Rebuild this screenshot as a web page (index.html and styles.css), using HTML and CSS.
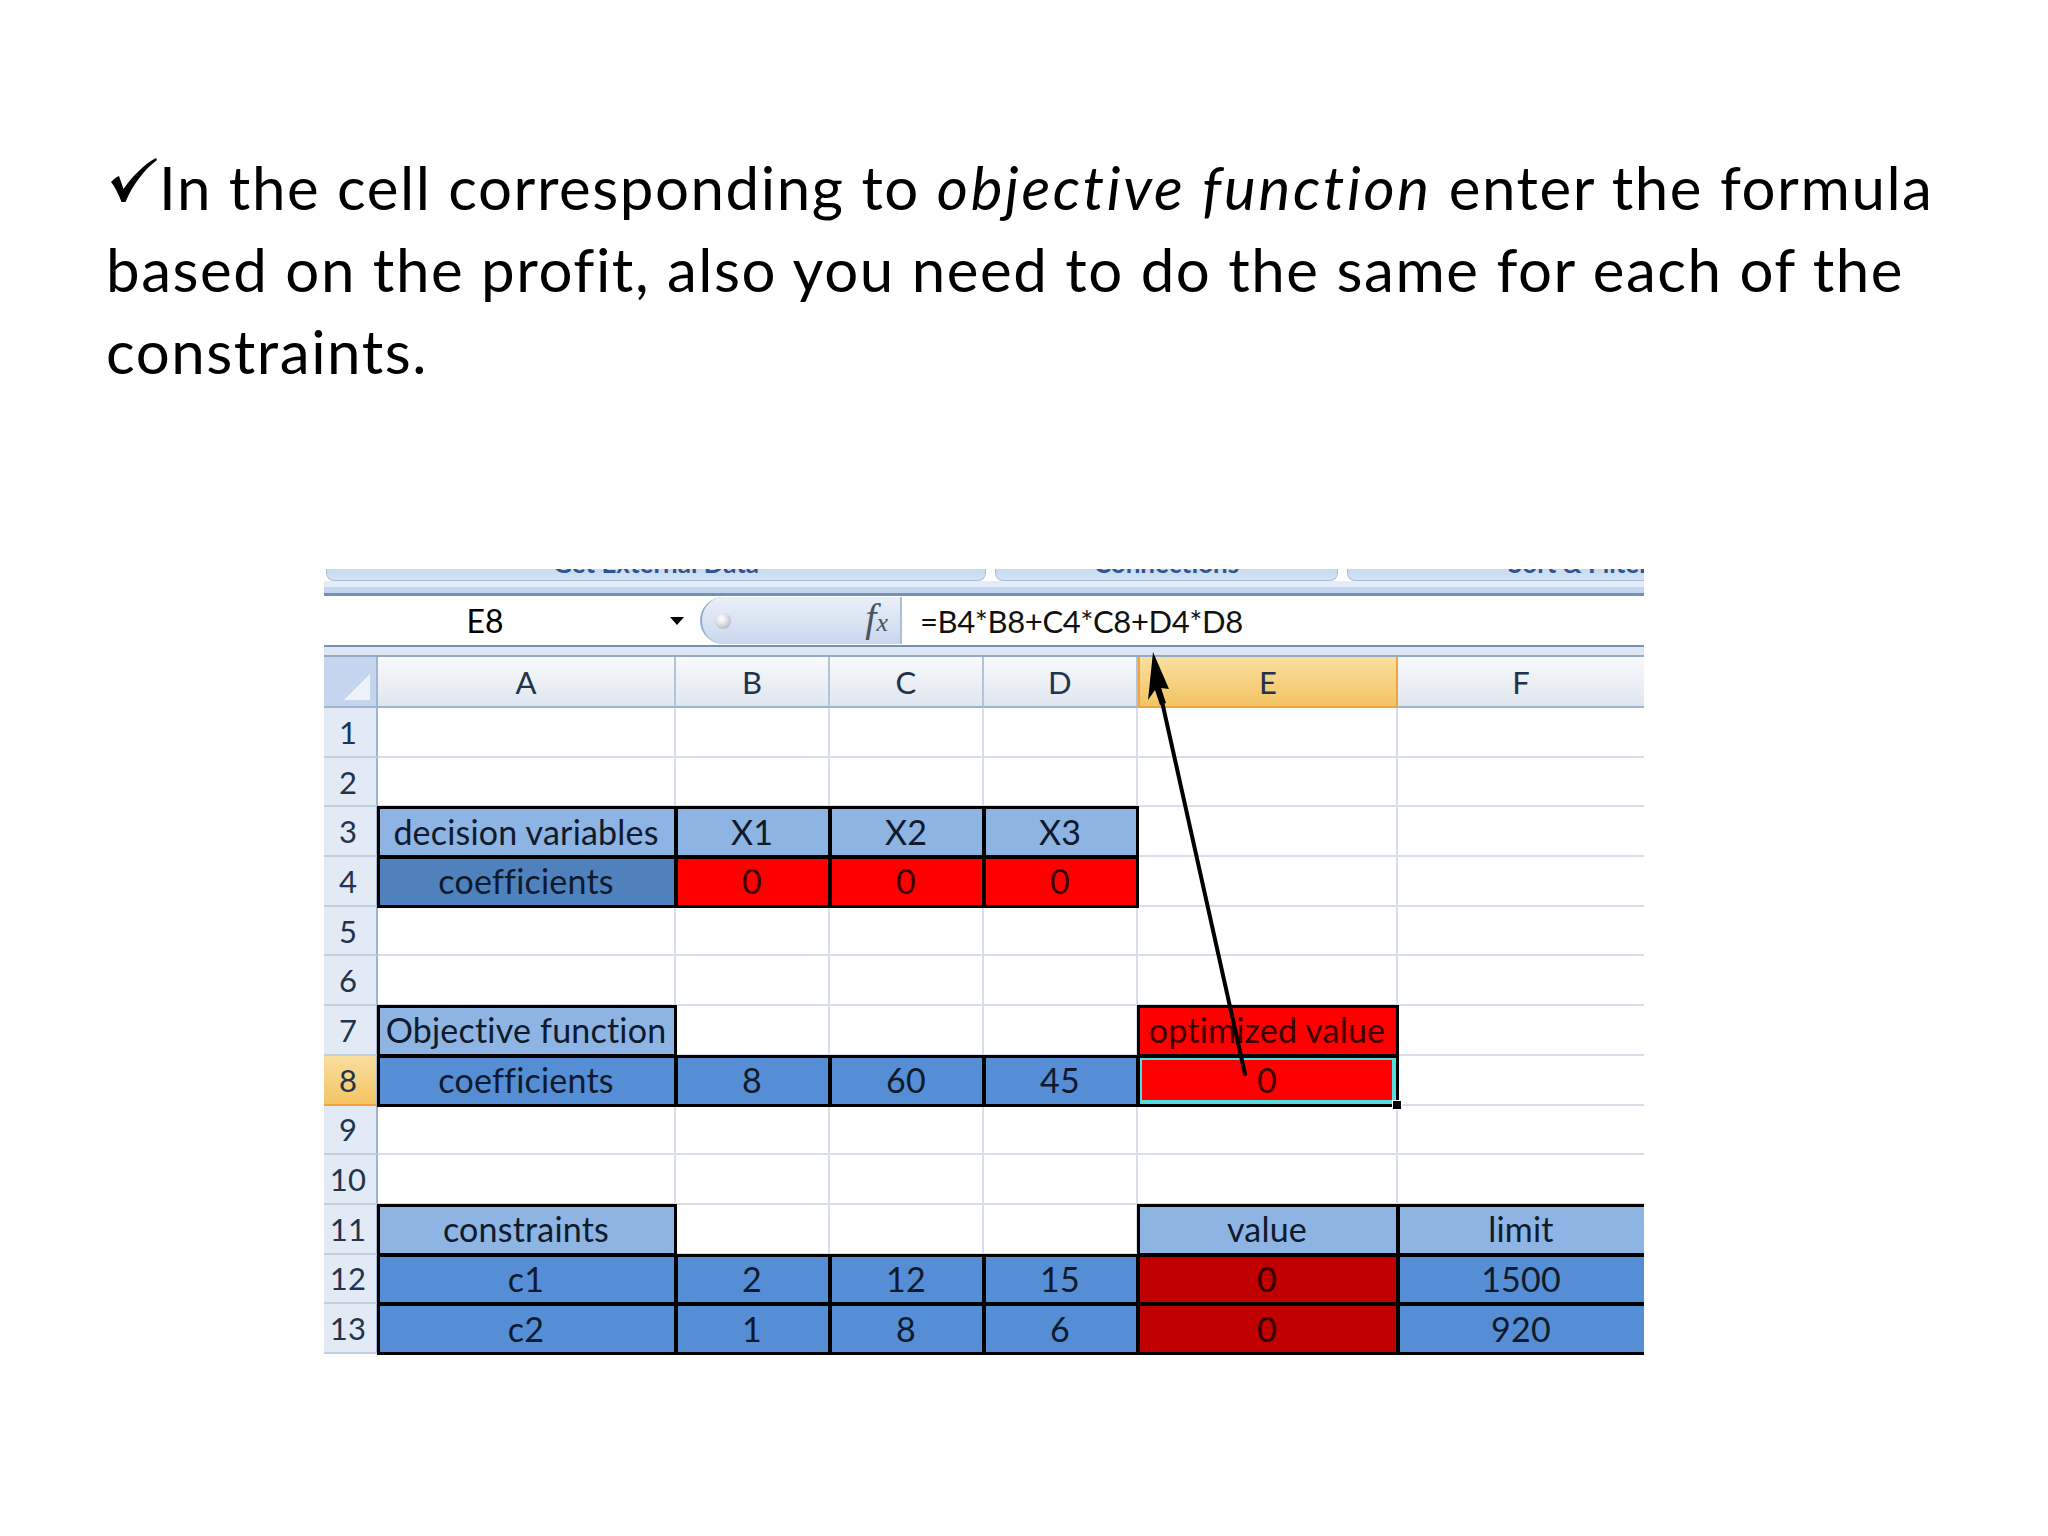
FILE: index.html
```html
<!DOCTYPE html>
<html>
<head>
<meta charset="utf-8">
<link rel="stylesheet" href="styles.css">
</head>
<body>
<div class="slide">
  <p class="bullet">
    <span class="line"><svg class="check" width="46" height="44" viewBox="0 0 46 44"><path d="M0 24 C3 21 5 19 8 18 L12.5 31 C21 19 32 7 45 0 L46 2 C34 11 22 26 14.5 44 L10.5 44 C7.5 36 4 29 0 24 Z" fill="#000"/></svg>In the cell corresponding to <em>objective function</em> enter the formula</span>
    <span class="line">based on the profit, also you need to do the same for each of the</span>
    <span class="line">constraints.</span>
  </p>
  <div class="sheet">
    <div class="ribbon">
      <div class="groups">
        <div class="grp g1"><span>Get External Data</span></div>
        <div class="grp g2"><span>Connections</span></div>
        <div class="grp g3"><span>Sort &amp; Filter</span></div>
      </div>
      <div class="strip"></div>
    </div>
    <div class="fbar">
      <div class="namebox"><span class="name">E8</span><span class="dd"></span></div>
      <div class="pill"><span class="knob"></span><span class="fx">f<span class="fxx">x</span></span></div>
      <div class="formula">=B4*B8+C4*C8+D4*D8</div>
    </div>
    <div class="sep"></div>
    <div class="grid">
      <div class="corner"><svg width="30" height="30" viewBox="0 0 30 30"><path d="M28 2 L28 28 L2 28 Z" fill="#eef3f9"/></svg></div>
      <div class="ch">A</div><div class="ch">B</div><div class="ch">C</div><div class="ch">D</div><div class="ch hi">E</div><div class="ch">F</div>

      <div class="rh">1</div><div class="c"></div><div class="c"></div><div class="c"></div><div class="c"></div><div class="c"></div><div class="c"></div>
      <div class="rh">2</div><div class="c"></div><div class="c"></div><div class="c"></div><div class="c"></div><div class="c"></div><div class="c"></div>
      <div class="rh">3</div><div class="c lb bx">decision variables</div><div class="c lb bx">X1</div><div class="c lb bx">X2</div><div class="c lb bx">X3</div><div class="c"></div><div class="c"></div>
      <div class="rh">4</div><div class="c mb bx">coefficients</div><div class="c rd bx">0</div><div class="c rd bx">0</div><div class="c rd bx">0</div><div class="c"></div><div class="c"></div>
      <div class="rh">5</div><div class="c"></div><div class="c"></div><div class="c"></div><div class="c"></div><div class="c"></div><div class="c"></div>
      <div class="rh">6</div><div class="c"></div><div class="c"></div><div class="c"></div><div class="c"></div><div class="c"></div><div class="c"></div>
      <div class="rh">7</div><div class="c lb bx">Objective function</div><div class="c"></div><div class="c"></div><div class="c"></div><div class="c rd bx">optimized value</div><div class="c"></div>
      <div class="rh hi">8</div><div class="c bl bx">coefficients</div><div class="c bl bx">8</div><div class="c bl bx">60</div><div class="c bl bx">45</div><div class="c rd sel">0</div><div class="c"></div>
      <div class="rh">9</div><div class="c"></div><div class="c"></div><div class="c"></div><div class="c"></div><div class="c"></div><div class="c"></div>
      <div class="rh">10</div><div class="c"></div><div class="c"></div><div class="c"></div><div class="c"></div><div class="c"></div><div class="c"></div>
      <div class="rh">11</div><div class="c lb bx">constraints</div><div class="c"></div><div class="c"></div><div class="c"></div><div class="c lb bx">value</div><div class="c lb bx">limit</div>
      <div class="rh">12</div><div class="c bl bx">c1</div><div class="c bl bx">2</div><div class="c bl bx">12</div><div class="c bl bx">15</div><div class="c dr bx">0</div><div class="c bl bx">1500</div>
      <div class="rh">13</div><div class="c bl bx">c2</div><div class="c bl bx">1</div><div class="c bl bx">8</div><div class="c bl bx">6</div><div class="c dr bx">0</div><div class="c bl bx">920</div>
    </div>
    <svg class="arrow" width="1320" height="790" viewBox="0 0 1320 790">
      <line x1="833" y1="110" x2="921" y2="505" stroke="#000" stroke-width="4" stroke-linecap="round"/>
      <path d="M829 83 L824 131 L831 121 L836 136 L842 134 L837 119 L845 120 Z" fill="#000"/>
    </svg>
  </div>
</div>
</body>
</html>
```
FILE: styles.css
```css
html, body {
  margin: 0;
  padding: 0;
  background: #ffffff;
}
body {
  width: 2048px;
  height: 1536px;
  overflow: hidden;
  font-family: Lato, "Open Sans", sans-serif;
  color: #000;
}
.slide {
  padding-top: 146px;
}
.bullet {
  margin: 0;
  padding-left: 106px;
  font-size: 60px;
  line-height: 82px;
  letter-spacing: 1.55px;
}
.bullet .line {
  display: block;
  white-space: nowrap;
}
.bullet em {
  font-style: italic;
  letter-spacing: 2.7px;
}
.check {
  vertical-align: 8px;
  margin-left: 5px;
  margin-right: 2px;
}

/* spreadsheet */
.sheet {
  position: relative;
  margin-top: 177px;
  margin-left: 324px;
  width: 1320px;
}
.ribbon {
  height: 27px;
  overflow: hidden;
}
.groups {
  display: flex;
  height: 12px;
  gap: 9px;
  padding-left: 2px;
}
.grp {
  height: 12px;
  box-sizing: border-box;
  background: linear-gradient(#c9dbf1, #d3e3f5);
  border: 1.5px solid #a7bedb;
  border-top: none;
  border-radius: 0 0 8px 8px;
  overflow: hidden;
  font-size: 26px;
  font-weight: bold;
  color: #2f558e;
  text-align: center;
}
.grp span {
  display: block;
  line-height: 26px;
  margin-top: -19px;
  white-space: nowrap;
}
.g1 { width: 660px; }
.g2 { width: 343px; }
.g3 {
  flex: 1;
  border-right: none;
  border-radius: 0 0 0 8px;
  text-align: left;
}
.g3 span { padding-left: 160px; }
.strip {
  height: 15px;
  background: linear-gradient(#e2edf9 0, #e2edf9 6px, #c4d6ed 6px, #c4d6ed 12px, #7390b6 12px, #7390b6 15px);
}
.fbar {
  height: 49px;
  border-bottom: 2px solid #7591b6;
  display: flex;
  align-items: stretch;
  background: #fff;
}
.namebox {
  width: 376px;
  display: flex;
  align-items: center;
  font-size: 32px;
}
.name {
  width: 322px;
  text-align: center;
}
.dd {
  margin-left: 24px;
  width: 0;
  height: 0;
  border-left: 7px solid transparent;
  border-right: 7px solid transparent;
  border-top: 8px solid #000;
}
.pill {
  width: 202px;
  box-sizing: border-box;
  margin-top: 1px;
  margin-bottom: 1px;
  border-radius: 24px 0 0 24px;
  border-left: 2px solid #93aacb;
  border-right: 2px solid #aebfd5;
  background: linear-gradient(#eaf0f8, #c8d8ee);
  display: flex;
  align-items: center;
  padding-left: 13px;
}
.knob {
  width: 16px;
  height: 16px;
  border-radius: 50%;
  background: radial-gradient(circle at 40% 35%, #ffffff 0, #e4e6ea 35%, #9aa3ad 100%);
}
.fx {
  margin-left: auto;
  margin-right: 12px;
  font-family: "Liberation Serif", serif;
  font-style: italic;
  font-size: 40px;
  line-height: 40px;
  color: #4b5560;
}
.fxx {
  font-size: 26px;
}
.formula {
  display: flex;
  align-items: center;
  padding-left: 18px;
  font-size: 31px;
  letter-spacing: -0.4px;
  color: #111;
}
.sep {
  height: 8px;
  background: #dde7f3;
  border-bottom: 2px solid #93abc9;
}
.grid {
  display: grid;
  grid-template-columns: 54px 298px 154px 154px 154px 260px 248px;
  grid-template-rows: 51px repeat(13, 49.69px);
  width: 1320px;
  overflow-x: clip;
  font-size: 34px;
  letter-spacing: 0.2px;
}
.grid > div {
  box-sizing: border-box;
  display: flex;
  align-items: center;
  justify-content: center;
  white-space: nowrap;
}
.corner {
  background: #c3d6ee;
  border-right: 2px solid #9fb5d1;
  border-bottom: 2px solid #9fb5d1;
  align-items: flex-end !important;
  justify-content: flex-end !important;
  padding: 0 4px 4px 0;
}
.corner svg { display: block; }
.ch {
  background: linear-gradient(#f8fafc, #dfe6ef);
  border-right: 2px solid #b3c4d9;
  border-bottom: 2px solid #9db3cf;
  color: #22344d;
  font-size: 31px;
}
.ch.hi {
  background: linear-gradient(#fadf9f, #f3c463);
  border-right: 2px solid #f1a33d;
  border-left: 2px solid #f1a33d;
  border-bottom: 2px solid #f1a33d;
}
.rh {
  background: #e2eaf6;
  border-right: 2px solid #9db5d2;
  border-bottom: 2px solid #c1cfe1;
  color: #22344d;
  font-size: 31px;
  padding-right: 4px;
}
.rh.hi {
  background: linear-gradient(#fadf9f, #f3c463);
  border-bottom: 2px solid #f1a33d;
}
.c {
  background: #fff;
  border-right: 2px solid #d9dfea;
  border-bottom: 2px solid #d9dfea;
  color: #0f1a2c;
}
.lb { background: #8db4e2; }
.mb { background: #4f81bd; }
.bl { background: #558ed5; }
.rd { background: #ff0000; color: #3a0000; }
.dr { background: #c00000; color: #2a0000; }
.bx {
  position: relative;
  z-index: 1;
  outline: 3px solid #000;
  outline-offset: -2px;
}
.sel {
  position: relative;
  z-index: 2;
  outline: 3px solid #000;
  outline-offset: -2px;
  box-shadow: inset 0 0 0 4px #52dede;
}
.sel::after {
  content: "";
  position: absolute;
  right: -6px;
  bottom: -6px;
  width: 8px;
  height: 8px;
  background: #000;
  border: 1px solid #fff;
}
.arrow {
  position: absolute;
  left: 0;
  top: 0;
  z-index: 5;
  pointer-events: none;
}
```
